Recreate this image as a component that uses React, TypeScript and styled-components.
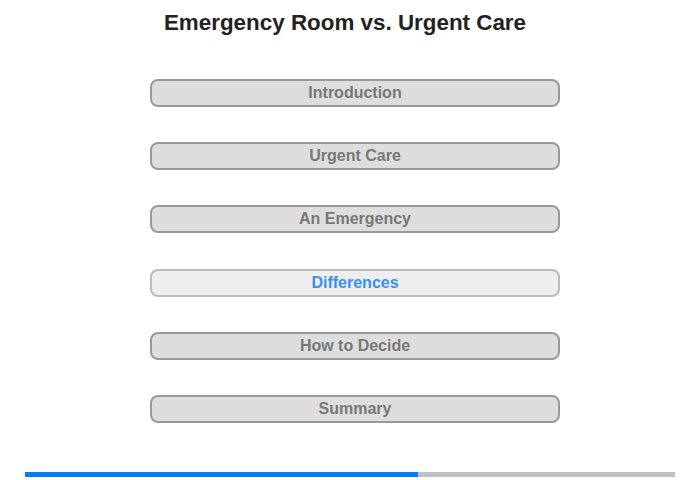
import React from "react";
import styled, { createGlobalStyle } from "styled-components";

const GlobalStyle = createGlobalStyle`
  html, body {
    margin: 0;
    padding: 0;
    background: #fff;
    font-family: "Liberation Sans", Arial, sans-serif;
  }
`;

const sections = [
  "Introduction",
  "Urgent Care",
  "An Emergency",
  "Differences",
  "How to Decide",
  "Summary",
];

const current = 3;

export default function App() {
  return (
    <>
      <GlobalStyle />
      <Page>
        <Title>Emergency Room vs. Urgent Care</Title>
        <Menu>
          {sections.map((s, i) => (
            <MenuButton key={s} $active={i === current}>
              {s}
            </MenuButton>
          ))}
        </Menu>
        <Progress>
          <ProgressFill style={{ width: `${(393 / 650) * 100}%` }} />
        </Progress>
      </Page>
    </>
  );
}

const Page = styled.div`
  width: 700px;
  height: 480px;
  display: flex;
  flex-direction: column;
  align-items: center;
  box-sizing: border-box;
  padding-top: 10px;
`;

const Title = styled.h1`
  margin: 0 10px 0 0;
  font-size: 22.4px;
  font-weight: bold;
  color: #222;
  line-height: 26px;
`;

const Menu = styled.div`
  display: flex;
  flex-direction: column;
  gap: 35.2px;
  margin: 43px 0 0 10px;
`;

const MenuButton = styled.div<{ $active?: boolean }>`
  width: 410px;
  height: 28px;
  box-sizing: border-box;
  border: 2px solid ${({ $active }) => ($active ? "#bbb" : "#999")};
  border-radius: 8px;
  background: ${({ $active }) => ($active ? "#eee" : "#ddd")};
  color: ${({ $active }) => ($active ? "#3a8ef6" : "#777")};
  font-size: 16px;
  font-weight: bold;
  display: flex;
  align-items: center;
  justify-content: center;
  cursor: pointer;
`;

const Progress = styled.div`
  width: 650px;
  height: 5px;
  background: #c0c0c0;
  margin-top: 49px;
  display: flex;
`;

const ProgressFill = styled.div`
  height: 100%;
  background: #007bff;
`;
